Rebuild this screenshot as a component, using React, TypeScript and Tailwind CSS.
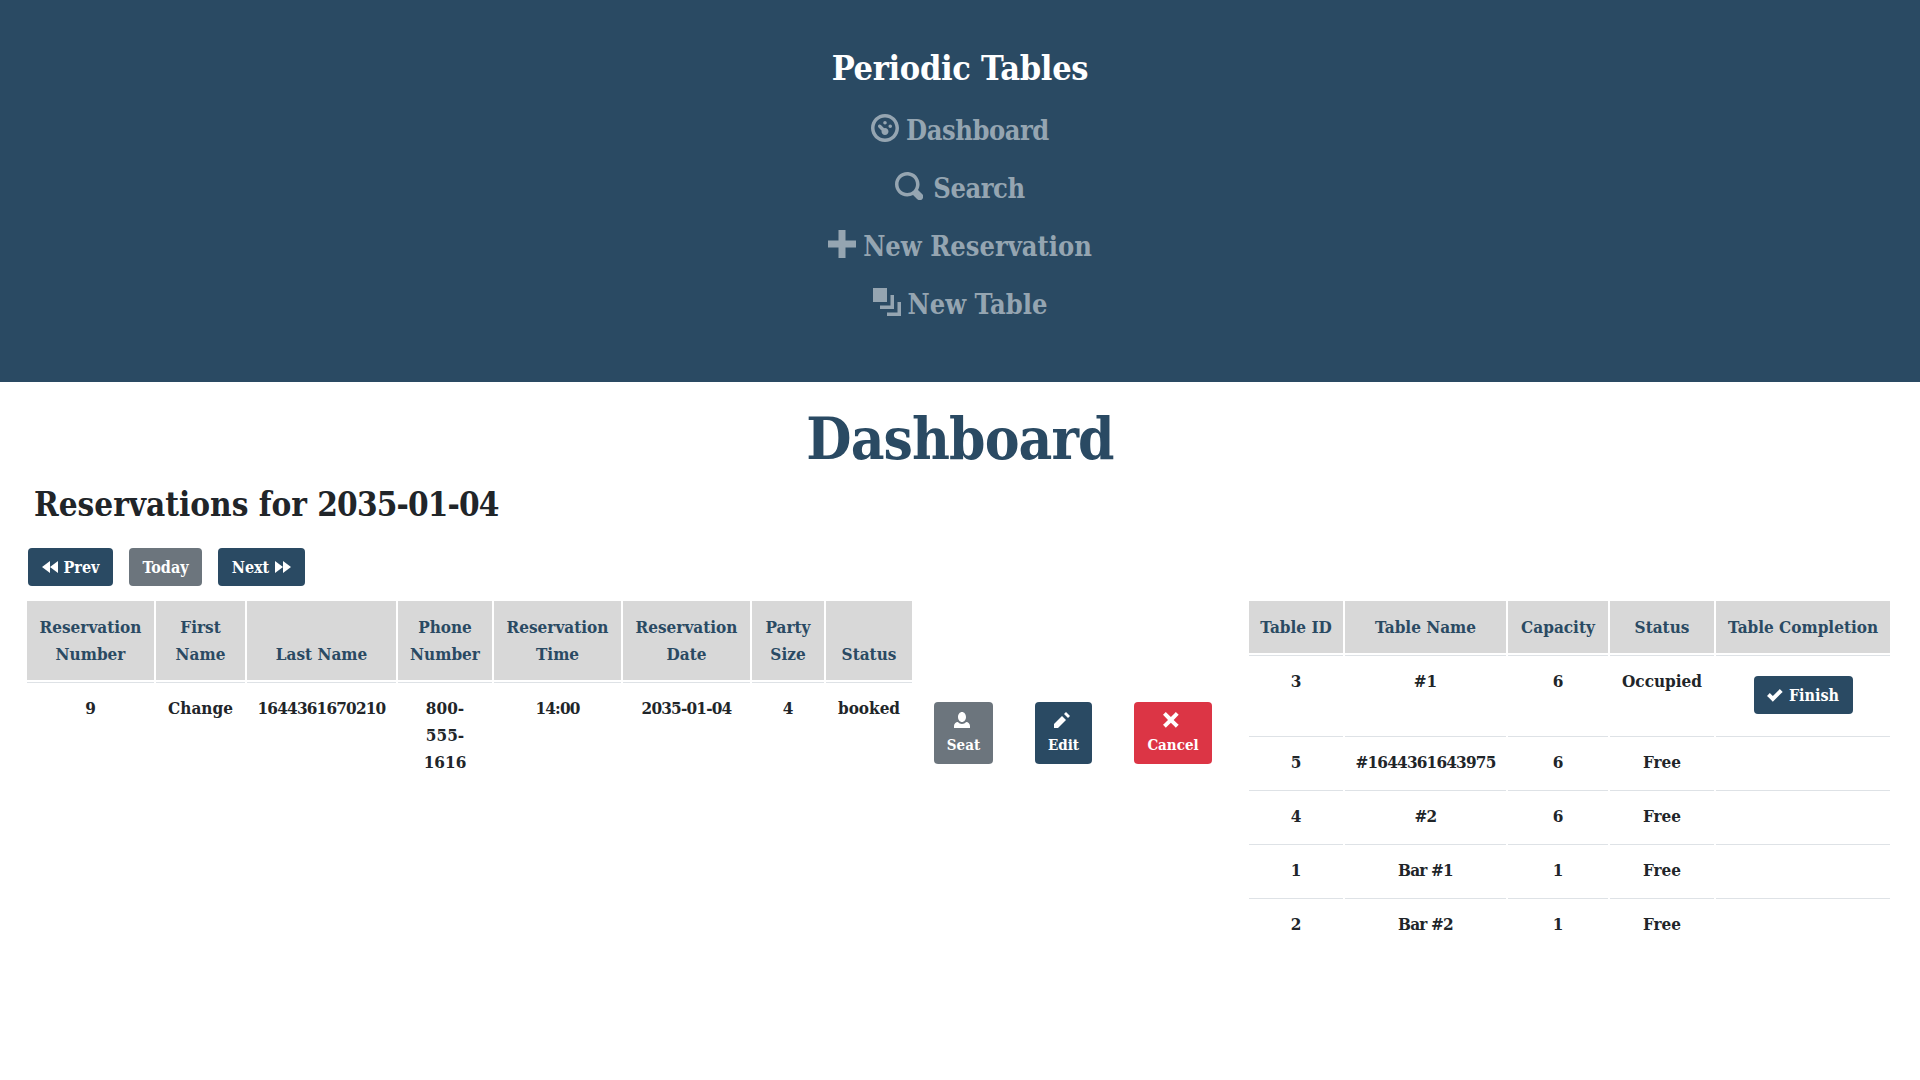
import type { ReactNode } from 'react';

const ICONS = {
  dashboard:
    'M4 0c-2.2 0-4 1.8-4 4s1.8 4 4 4 4-1.8 4-4-1.8-4-4-4zm0 1c1.66 0 3 1.34 3 3s-1.34 3-3 3-3-1.34-3-3 1.34-3 3-3zm0 1c-.28 0-.5.22-.5.5s.22.5.5.5.5-.22.5-.5-.22-.5-.5-.5zm-1.66 1a.5.5 0 0 0-.19.84l.91.91c-.02.08-.06.16-.06.25 0 .55.45 1 1 1s1-.45 1-1-.45-1-1-1c-.09 0-.17.04-.25.06l-.91-.91a.5.5 0 0 0-.44-.16.5.5 0 0 0-.06 0zm3.16 0c-.28 0-.5.22-.5.5s.22.5.5.5.5-.22.5-.5-.22-.5-.5-.5z',
  search:
    'M3.5 0c-1.93 0-3.5 1.57-3.5 3.5s1.57 3.5 3.5 3.5c.59 0 1.17-.14 1.66-.41a1 1 0 0 0 .13.13l1 1a1.02 1.02 0 1 0 1.44-1.44l-1-1a1 1 0 0 0-.16-.13c.27-.49.44-1.06.44-1.66 0-1.93-1.57-3.5-3.5-3.5zm0 1c1.39 0 2.5 1.11 2.5 2.5 0 .66-.24 1.27-.66 1.72-.01.01-.02.02-.03.03a1 1 0 0 0-.13.13c-.44.4-1.04.63-1.69.63-1.39 0-2.5-1.11-2.5-2.5s1.11-2.5 2.5-2.5z',
  plus: 'M3 0v3h-3v2h3v3h2v-3h3v-2h-3v-3h-2z',
  layers: 'M0 0v4h4v-4h-4zm5 2v3h-3v1h4v-4h-1zm2 2v3h-3v1h4v-4h-1z',
  back: 'M4 1l-4 3 4 3v-6zm0 3l4 3v-6l-4 3z',
  forward: 'M0 1v6l4-3-4-3zm4 3v3l4-3-4-3v3z',
  person:
    'M4 0c-1.1 0-2 1.12-2 2.5s.9 2.5 2 2.5 2-1.12 2-2.5-.9-2.5-2-2.5zm-2.09 5c-1.06.05-1.91.92-1.91 2v1h8v-1c0-1.08-.84-1.95-1.91-2-.54.61-1.28 1-2.09 1-.81 0-1.55-.39-2.09-1z',
  pencil: 'M6 0l-1 1 2 2 1-1-2-2zm-2 2l-4 4v2h2l4-4-2-2z',
  x: 'M1.41 0l-1.41 1.41.72.72 1.78 1.81-1.78 1.78-.72.69 1.41 1.44.72-.72 1.81-1.81 1.78 1.81.69.72 1.44-1.44-.72-.69-1.81-1.78 1.81-1.81.72-.72-1.44-1.41-.69.72-1.78 1.78-1.81-1.78-.72-.72z',
  check:
    'M6.41 1l-.69.72-2.78 2.78-.81-.78-.72-.72-1.41 1.44.72.72 1.5 1.5.69.72.72-.72 3.5-3.5.72-.72-1.44-1.44z',
};

const Icon = ({ name, className }: { name: keyof typeof ICONS; className: string }) => (
  <svg viewBox="0 0 8 8" fill="currentColor" className={className}>
    <path d={ICONS[name]} />
  </svg>
);

const NavItem = ({ icon, label, tight }: { icon: ReactNode; label: string; tight?: boolean }) => (
  <div className="flex h-[58px] items-center justify-center gap-[7px] text-[27px] font-bold text-[#95a5b1]">
    {icon}
    <span className={tight ? 'pt-[2px] tracking-[-0.45px]' : 'pt-[2px]'}>{label}</span>
  </div>
);

const Btn = ({ className, children }: { className: string; children: ReactNode }) => (
  <button className={`flex h-[38px] items-center justify-center rounded-[4px] text-[16px] font-bold text-white ${className}`}>
    {children}
  </button>
);

const ActionBtn = ({ className, icon, label }: { className: string; icon: ReactNode; label: string }) => (
  <button className={`mx-auto mt-[7px] flex h-[62px] flex-col items-center justify-start rounded-[4px] pt-[10px] text-[15px] font-bold leading-[21px] text-white ${className}`}>
    <span className="mb-[7px] mr-1 flex h-[16px] items-center">{icon}</span>
    {label}
  </button>
);

const th = 'bg-[#d8d8d8] px-2 pb-3 pt-[13px] align-bottom text-[17px] font-bold leading-[27px] text-[#2a4a63]';
const td = 'border-t border-[#dee2e6] px-2 py-3 align-top text-center text-[17px] font-bold leading-[27px] text-[#212529]';

const digitCell = (v: string) => (/\d\d|#\d/.test(v) ? `${td} tracking-[-0.8px]` : td);

const reservationHeaders = ['Reservation Number', 'First Name', 'Last Name', 'Phone Number', 'Reservation Time', 'Reservation Date', 'Party Size', 'Status'];
const reservation = ['9', 'Change', '1644361670210', '800-555-1616', '14:00', '2035-01-04', '4', 'booked'];

const tableRows = [
  ['5', '#1644361643975', '6', 'Free'],
  ['4', '#2', '6', 'Free'],
  ['1', 'Bar #1', '1', 'Free'],
  ['2', 'Bar #2', '1', 'Free'],
];

const navIcon = 'h-7 w-7 -translate-y-[2px]';

export default function App() {
  return (
    <div className="min-h-[1080px] bg-white font-['Roboto_Slab','DejaVu_Serif_Condensed','DejaVu_Serif',serif]">
      {/* Top nav */}
      <header className="h-[382px] bg-[#2a4a63] pt-[44px] text-center">
        <div className="mb-[9px] text-[34px] font-bold leading-[48px] tracking-[-0.3px] text-white">Periodic Tables</div>
        <NavItem tight icon={<Icon name="dashboard" className={navIcon} />} label="Dashboard" />
        <NavItem tight icon={<Icon name="search" className={`${navIcon} mr-[3px]`} />} label="Search" />
        <NavItem icon={<Icon name="plus" className={navIcon} />} label="New Reservation" />
        <NavItem icon={<Icon name="layers" className={navIcon} />} label="New Table" />
      </header>

      <main>
        <h1 className="mt-[19px] text-center text-[58px] font-bold leading-[77px] tracking-[-0.9px] text-[#2a4a63]">Dashboard</h1>
        <h2 className="ml-[34px] mt-[8px] text-[33px] font-bold leading-[38px] text-[#212529]">
          Reservations for <span className="tracking-[-0.85px]">2035-01-04</span>
        </h2>

        <div className="ml-[28px] mt-[24px] flex gap-4">
          <Btn className="w-[85px] gap-[6px] bg-[#2a4a63]">
            <Icon name="back" className="h-4 w-4" />
            <span className="pt-[2px]">Prev</span>
          </Btn>
          <Btn className="w-[73px] bg-[#6c757d]">
            <span className="pt-[2px]">Today</span>
          </Btn>
          <Btn className="w-[87px] gap-[6px] bg-[#2a4a63]">
            <span className="pt-[2px]">Next</span>
            <Icon name="forward" className="h-4 w-4" />
          </Btn>
        </div>

        <div className="mt-[13px] flex items-start">
          {/* Reservations */}
          <table className="ml-[25px] w-[1209px] table-fixed border-separate border-spacing-[2px]">
            <colgroup>
              <col className="w-[127px]" />
              <col className="w-[89px]" />
              <col className="w-[149px]" />
              <col className="w-[94px]" />
              <col className="w-[127px]" />
              <col className="w-[127px]" />
              <col className="w-[72px]" />
              <col className="w-[86px]" />
              <col className="w-[99px]" />
              <col className="w-[97px]" />
              <col className="w-[118px]" />
            </colgroup>
            <thead>
              <tr>
                {reservationHeaders.map((h) => (
                  <th key={h} className={th}>{h}</th>
                ))}
              </tr>
            </thead>
            <tbody>
              <tr>
                {reservation.map((v, i) => (
                  <td key={i} className={i === 3 ? `${td} px-3` : digitCell(v)}>{v}</td>
                ))}
                <td className="align-top pt-[13px]">
                  <ActionBtn className="w-[59px] bg-[#6c757d]" icon={<Icon name="person" className="h-4 w-4" />} label="Seat" />
                </td>
                <td className="align-top pt-[13px]">
                  <ActionBtn className="w-[57px] bg-[#2a4a63]" icon={<Icon name="pencil" className="h-4 w-4" />} label="Edit" />
                </td>
                <td className="align-top pt-[13px]">
                  <ActionBtn className="w-[78px] bg-[#dc3545]" icon={<Icon name="x" className="h-4 w-4" />} label="Cancel" />
                </td>
              </tr>
            </tbody>
          </table>

          {/* Tables */}
          <table className="ml-[13px] w-[645px] table-fixed border-separate border-spacing-[2px]">
            <colgroup>
              <col className="w-[94px]" />
              <col className="w-[161px]" />
              <col className="w-[100px]" />
              <col className="w-[104px]" />
              <col className="w-[174px]" />
            </colgroup>
            <thead>
              <tr>
                {['Table ID', 'Table Name', 'Capacity', 'Status', 'Table Completion'].map((h) => (
                  <th key={h} className={`${th} whitespace-nowrap px-0 align-middle`}>{h}</th>
                ))}
              </tr>
            </thead>
            <tbody>
              <tr>
                {['3', '#1', '6', 'Occupied'].map((v, i) => (
                  <td key={i} className={td}>{v}</td>
                ))}
                <td className={td}>
                  <Btn className="mx-auto my-2 w-[99px] gap-[6px] bg-[#2a4a63]">
                    <Icon name="check" className="h-4 w-4" />
                    Finish
                  </Btn>
                </td>
              </tr>
              {tableRows.map((row) => (
                <tr key={row[0]}>
                  {row.map((v, i) => (
                    <td key={i} className={`${digitCell(v)} px-0`}>{v}</td>
                  ))}
                  <td className={td} />
                </tr>
              ))}
            </tbody>
          </table>
        </div>
      </main>
    </div>
  );
}
